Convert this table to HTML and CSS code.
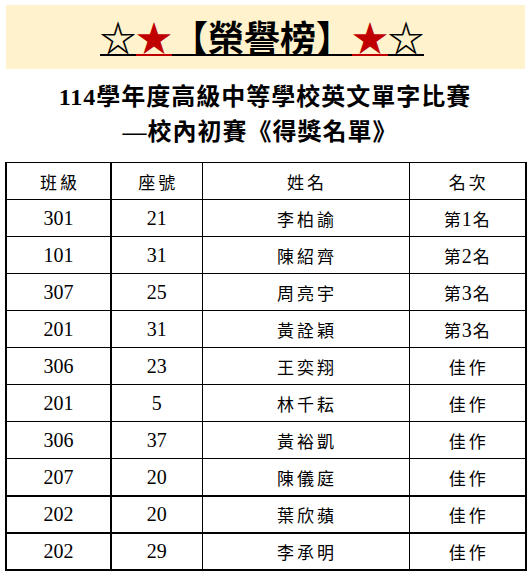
FILE: index.html
```html
<!DOCTYPE html>
<html lang="zh-Hant">
<head>
<meta charset="utf-8">
<title>榮譽榜</title>
<link rel="stylesheet" href="styles.css">
</head>
<body>
<div class="banner">
  <div class="title">
    <span class="c">☆</span><span class="c red">★</span><span class="c">【</span><span class="c">榮</span><span class="c">譽</span><span class="c">榜</span><span class="c">】</span><span class="c red">★</span><span class="c">☆</span>
  </div>
</div>
<div class="sub">
  <div class="line">114學年度高級中等學校英文單字比賽</div>
  <div class="line">—校內初賽《得獎名單》</div>
</div>
<table class="list">
  <colgroup><col class="w1"><col class="w2"><col class="w3"><col class="w4"></colgroup>
  <thead>
    <tr><th class="cj">班級</th><th class="cj">座號</th><th class="cj">姓名</th><th class="cj">名次</th></tr>
  </thead>
  <tbody>
    <tr><td class="num">301</td><td class="num">21</td><td class="cj">李柏諭</td><td class="rk">第<span class="d">1</span>名</td></tr>
    <tr><td class="num">101</td><td class="num">31</td><td class="cj">陳紹齊</td><td class="rk">第<span class="d">2</span>名</td></tr>
    <tr><td class="num">307</td><td class="num">25</td><td class="cj">周亮宇</td><td class="rk">第<span class="d">3</span>名</td></tr>
    <tr><td class="num">201</td><td class="num">31</td><td class="cj">黃詮穎</td><td class="rk">第<span class="d">3</span>名</td></tr>
    <tr><td class="num">306</td><td class="num">23</td><td class="cj">王奕翔</td><td class="cj">佳作</td></tr>
    <tr><td class="num">201</td><td class="num">5</td><td class="cj">林千耘</td><td class="cj">佳作</td></tr>
    <tr><td class="num">306</td><td class="num">37</td><td class="cj">黃裕凱</td><td class="cj">佳作</td></tr>
    <tr><td class="num">207</td><td class="num">20</td><td class="cj">陳儀庭</td><td class="cj">佳作</td></tr>
    <tr class="thick"><td class="num">202</td><td class="num">20</td><td class="cj">葉欣蘋</td><td class="cj">佳作</td></tr>
    <tr class="thick"><td class="num">202</td><td class="num">29</td><td class="cj">李承明</td><td class="cj">佳作</td></tr>
  </tbody>
</table>
</body>
</html>
```
FILE: styles.css
```css
html, body {
  margin: 0;
  padding: 0;
  background: #ffffff;
}
body {
  padding: 5px 6px 0 5px;
  color: #000;
  font-family: "Liberation Serif", "Noto Sans CJK TC", serif;
}
.banner {
  margin-left: 1px;
  height: 64px;
  background: #fff2cc;
  display: flex;
  justify-content: center;
  align-items: flex-start;
}
.title {
  display: flex;
  margin-top: 15px;
  margin-right: 7px;
  font-family: "Noto Sans CJK TC", sans-serif;
  font-weight: 700;
  font-size: 36px;
}
.c {
  width: 36px;
  height: 34px;
  line-height: 32px;
  text-align: center;
  border-bottom: 2px solid #000;
}
.c.red {
  color: #c00000;
  border-bottom-color: #c00000;
}
.sub {
  padding-top: 11px;
  text-align: center;
  font-size: 24px;
  font-weight: 700;
  letter-spacing: 1px;
}
.line {
  height: 35px;
  line-height: 35px;
}
.line + .line {
  margin-left: -10px;
}
.list {
  margin-top: 12px;
  width: 520px;
  border-collapse: collapse;
  table-layout: fixed;
  border: 2px solid #000;
  border-top-width: 1px;
}
.w1 { width: 105px; }
.w2 { width: 91px; }
.w3 { width: 207px; }
.w4 { width: 117px; }
.list th, .list td {
  height: 36px;
  padding: 0;
  border: 1px solid #000;
  text-align: center;
  vertical-align: middle;
  font-weight: 400;
}
.list th:first-child, .list td:first-child {
  border-right-width: 2px;
}
.list tr.thick td {
  height: 35px;
  border-top-width: 2px;
}
.num {
  font-size: 20px;
}
.cj {
  font-size: 17px;
  letter-spacing: 3px;
  padding-left: 3px !important;
}
.rk {
  font-size: 17px;
  letter-spacing: 1px;
}
.d {
  font-size: 20px;
}
```
